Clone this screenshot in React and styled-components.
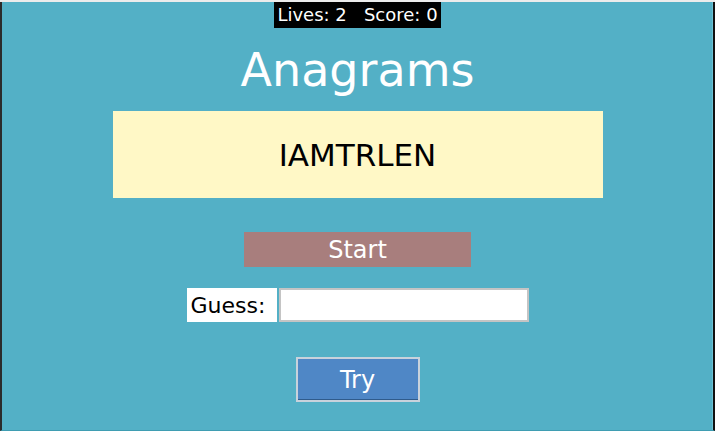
import React from 'react';
import styled, { createGlobalStyle } from 'styled-components';

const Global = createGlobalStyle`
    html, body {
        margin: 0;
        padding: 0;
        background: #ececec;
    }
    body {
        font-family: "DejaVu Sans", Verdana, sans-serif;
    }
`;

const Frame = styled.div`
    margin-top: 2px;
    height: 428px;
    background: #53b0c6;
    border-left: 2px solid #2b2b2b;
    border-right: 2px solid #111;
    border-bottom: 1px solid #3f9db2;
    box-shadow: inset -1px 0 0 #6cc0d2;
    display: flex;
    flex-direction: column;
    align-items: center;
`;

const ScoreBar = styled.div`
    background: #000;
    color: #fff;
    font-size: 18px;
    line-height: 26px;
    padding: 0 3px;
    white-space: pre;
`;

const Title = styled.h1`
    margin: 14px 0 0;
    font-size: 46px;
    font-weight: normal;
    line-height: 56px;
    color: #fff;
`;

const WordBox = styled.div`
    margin-top: 13px;
    width: 490px;
    height: 87px;
    background: #fff8c6;
    display: flex;
    align-items: center;
    justify-content: center;
    font-size: 31px;
    color: #000;
`;

const StartButton = styled.button`
    margin-top: 34px;
    width: 227px;
    height: 35px;
    border: none;
    background: #a87e7d;
    color: #fff;
    font-family: inherit;
    font-size: 24px;
    padding: 0;
    cursor: pointer;
`;

const GuessRow = styled.div`
    margin-top: 21px;
    display: flex;
    align-items: stretch;
    gap: 2px;
    height: 34px;
`;

const Label = styled.label`
    background: #fff;
    color: #000;
    font-size: 22px;
    display: flex;
    align-items: center;
    padding: 0 4px;
    width: 82px;
`;

const Input = styled.input`
    box-sizing: border-box;
    width: 250px;
    height: 34px;
    border: 2px solid #c4c4c4;
    background: #fff;
    font-family: inherit;
    font-size: 20px;
    outline: none;
`;

const TryButton = styled.button`
    margin-top: 35px;
    box-sizing: border-box;
    width: 124px;
    height: 45px;
    border: 2px solid #c8d2dc;
    box-shadow: inset 0 -1px 0 #2f5b8c;
    background: #4f87c6;
    color: #fff;
    font-family: inherit;
    font-size: 24px;
    padding: 0;
    cursor: pointer;
`;

export default function App() {
    return (
        <>
            <Global />
            <Frame>
                <ScoreBar>{'Lives: 2   Score: 0'}</ScoreBar>
                <Title>Anagrams</Title>
                <WordBox>IAMTRLEN</WordBox>
                <StartButton>Start</StartButton>
                <GuessRow>
                    <Label htmlFor="guess">Guess:</Label>
                    <Input id="guess" type="text" />
                </GuessRow>
                <TryButton>Try</TryButton>
            </Frame>
        </>
    );
}
